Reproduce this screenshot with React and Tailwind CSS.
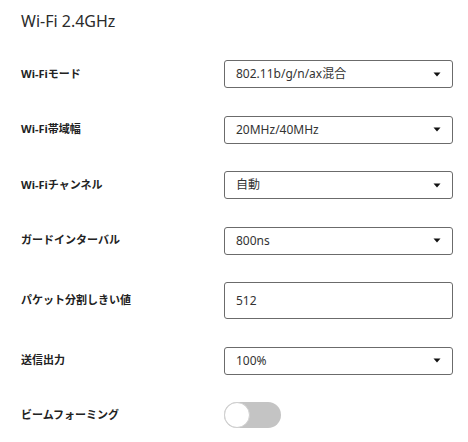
import React, { useState } from 'react'

const font = { fontFamily: "'Noto Sans', 'Noto Sans CJK JP', sans-serif" }

function Caret() {
  return (
    <svg width="8" height="5" viewBox="0 0 8 5" className="shrink-0">
      <path d="M0.5 0.5H7.5L4 4.5Z" fill="#111" />
    </svg>
  )
}

function SelectBox({ value }) {
  return (
    <div className="w-[229px] h-[28px] border border-[#6b6b6b] rounded-[3px] bg-white flex items-center justify-between pl-[11px] pr-[11px]">
      <span className="text-[12px] text-[#333]">{value}</span>
      <Caret />
    </div>
  )
}

function Row({ label, children }) {
  return (
    <div className="flex items-center">
      <div className="w-[203px] text-[11px] font-bold text-[#222]">{label}</div>
      {children}
    </div>
  )
}

export default function App() {
  const [beam, setBeam] = useState(false)

  return (
    <div className="w-[468px] h-[442px] bg-white pl-[21px] pt-[9px]" style={font}>
      <h2 className="text-[16px] leading-[24px] text-[#2b2b2b] font-normal">Wi-Fi 2.4GHz</h2>

      <div className="mt-[27px] flex flex-col gap-[27.5px]">
        <Row label="Wi-Fiモード">
          <SelectBox value="802.11b/g/n/ax混合" />
        </Row>
        <Row label="Wi-Fi帯域幅">
          <SelectBox value="20MHz/40MHz" />
        </Row>
        <Row label="Wi-Fiチャンネル">
          <SelectBox value="自動" />
        </Row>
        <Row label="ガードインターバル">
          <SelectBox value="800ns" />
        </Row>
        <Row label="パケット分割しきい値">
          <div className="w-[229px] h-[37px] border border-[#6b6b6b] rounded-[3px] bg-white flex items-center pl-[11px]">
            <span className="text-[12px] text-[#333]">512</span>
          </div>
        </Row>
        <Row label="送信出力">
          <SelectBox value="100%" />
        </Row>
        <Row label="ビームフォーミング">
          <button
            onClick={() => setBeam(!beam)}
            className={`w-[57px] h-[26px] rounded-full relative transition ${beam ? 'bg-[#3b82f6]' : 'bg-[#c4c4c4]'}`}
          >
            <span
              className={`absolute top-0 w-[26px] h-[26px] rounded-full bg-white border border-[#cfcfcf] transition ${beam ? 'left-[31px]' : 'left-0'}`}
            />
          </button>
        </Row>
      </div>
    </div>
  )
}
